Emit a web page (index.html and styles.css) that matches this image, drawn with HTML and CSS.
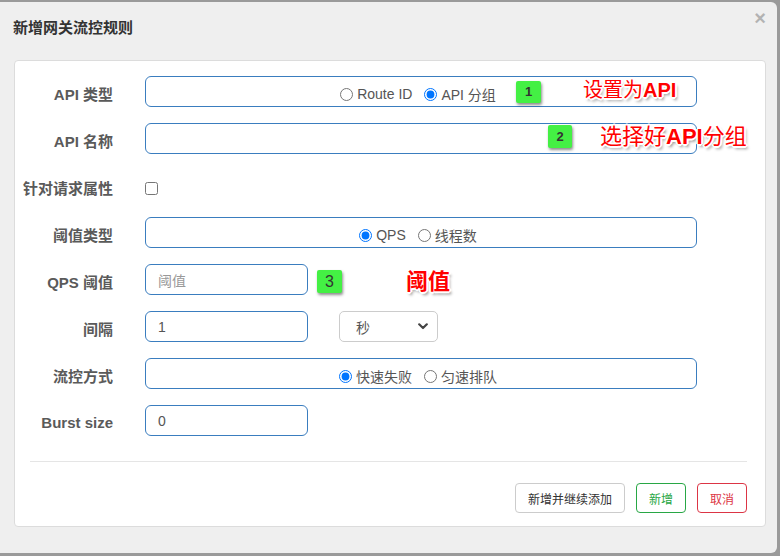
FILE: index.html
```html
<!DOCTYPE html>
<html lang="zh">
<head>
<meta charset="utf-8">
<title>新增网关流控规则</title>
<link rel="stylesheet" href="styles.css">
</head>
<body>
<div class="dialog">
  <div class="header">
    <h4 class="title">新增网关流控规则</h4>
    <span class="close">×</span>
  </div>
  <div class="panel">
    <div class="form">
      <div class="row">
        <label class="lbl">API 类型</label>
        <div class="box wide radios">
          <label class="opt"><input type="radio" name="t"> Route ID</label>
          <label class="opt"><input type="radio" name="t" checked> API 分组</label>
        </div>
      </div>
      <div class="row">
        <label class="lbl">API 名称</label>
        <div class="box wide"></div>
      </div>
      <div class="row">
        <label class="lbl">针对请求属性</label>
        <div class="check"><input type="checkbox"></div>
      </div>
      <div class="row">
        <label class="lbl">阈值类型</label>
        <div class="box wide radios">
          <label class="opt"><input type="radio" name="q" checked> QPS</label>
          <label class="opt"><input type="radio" name="q"> 线程数</label>
        </div>
      </div>
      <div class="row">
        <label class="lbl">QPS 阈值</label>
        <div class="box small"><span class="ph">阈值</span></div>
      </div>
      <div class="row">
        <label class="lbl">间隔</label>
        <div class="inline">
          <div class="box small"><span class="val">1</span></div>
          <div class="select"><span class="val">秒</span>
            <svg class="chev" width="10" height="7" viewBox="0 0 10 7"><path d="M1.2 1.3 L5 5 L8.8 1.3" fill="none" stroke="#444" stroke-width="2.2" stroke-linecap="round" stroke-linejoin="round"/></svg>
          </div>
        </div>
      </div>
      <div class="row">
        <label class="lbl">流控方式</label>
        <div class="box wide radios">
          <label class="opt"><input type="radio" name="c" checked> 快速失败</label>
          <label class="opt"><input type="radio" name="c"> 匀速排队</label>
        </div>
      </div>
      <div class="row">
        <label class="lbl">Burst size</label>
        <div class="box small"><span class="val">0</span></div>
      </div>
    </div>
    <div class="footer">
      <hr class="sep">
      <div class="buttons">
        <button class="btn">新增并继续添加</button>
        <button class="btn ok">新增</button>
        <button class="btn cancel">取消</button>
      </div>
    </div>
  </div>

  <span class="badge b1">1</span>
  <span class="badge b2">2</span>
  <span class="badge b3">3</span>
  <span class="note n1">设置为<b>API</b></span>
  <span class="note n2">选择好<b>API</b>分组</span>
  <span class="note n3">阈值</span>
</div>
</body>
</html>
```

FILE: styles.css
```css
html, body {
  margin: 0;
  padding: 0;
}
body {
  background: #9a9a9a;
  padding-top: 2px;
  font-family: "Liberation Sans", "Noto Sans CJK SC", sans-serif;
  height: 556px;
  box-sizing: border-box;
  overflow: hidden;
}
.dialog {
  position: relative;
  width: 777px;
  height: 551px;
  background: #efefef;
  border-radius: 0 6px 6px 0;
}
.header {
  height: 58px;
  box-sizing: border-box;
  padding: 16px 11px 0 13px;
  display: flex;
  justify-content: space-between;
  align-items: flex-start;
}
.title {
  margin: 0;
  font-size: 15px;
  line-height: 20px;
  font-weight: bold;
  color: #333;
}
.close {
  font-size: 20px;
  line-height: 21px;
  font-weight: bold;
  color: #000;
  opacity: 0.25;
  margin-top: -10px;
}
.panel {
  margin-left: 14px;
  width: 752px;
  box-sizing: border-box;
  background: #fff;
  border: 1px solid #dcdcdc;
  border-radius: 4px;
  padding: 15px 0 13px 0;
}
.form {
  display: flex;
  flex-direction: column;
  gap: 16px;
}
.row {
  display: grid;
  grid-template-columns: 98px 1fr;
  column-gap: 32px;
  align-items: center;
  height: 31px;
}
.lbl {
  text-align: right;
  font-size: 15px;
  font-weight: bold;
  color: #5a5a5a;
  white-space: nowrap;
  padding-top: 3px;
}
.box {
  height: 31px;
  box-sizing: border-box;
  border: 1px solid #3a7dbf;
  border-radius: 6px;
  display: flex;
  align-items: center;
  padding: 0 12px;
  font-size: 14px;
  color: #555;
}
.wide {
  width: 552px;
}
.small {
  width: 163px;
}
.radios {
  justify-content: center;
  padding: 5px 18px 0 12px;
  gap: 12px;
}
.opt {
  display: flex;
  align-items: center;
  color: #555;
  font-size: 14px;
}
.opt input {
  margin: 0 4px 0 0;
  width: 13px;
  height: 13px;
  accent-color: #0075ff;
}
.check {
  display: flex;
  align-items: center;
  padding-top: 5px;
}
.check input {
  margin: 0;
  width: 13px;
  height: 13px;
}
.ph {
  color: #999;
}
.val {
  color: #555;
}
.inline {
  display: flex;
  gap: 31px;
  align-items: center;
}
.select {
  width: 99px;
  height: 31px;
  box-sizing: border-box;
  border: 1px solid #ccc;
  border-radius: 5px;
  display: flex;
  align-items: center;
  justify-content: space-between;
  padding: 0 9px 0 16px;
  font-size: 14px;
}
.footer {
  padding: 0 18px 0 15px;
}
.sep {
  margin: 25px 0 0 0;
  border: 0;
  border-top: 1px solid #e5e5e5;
  height: 0;
}
.buttons {
  margin-top: 21px;
  display: flex;
  justify-content: flex-end;
  gap: 11px;
}
.btn {
  height: 30px;
  padding: 0 12px;
  font-family: "Liberation Sans", "Noto Sans CJK SC", sans-serif;
  font-size: 12px;
  background: #fff;
  color: #333;
  border: 1px solid #ccc;
  border-radius: 4px;
}
.btn.ok {
  color: #28a745;
  border-color: #28a745;
}
.btn.cancel {
  color: #dc3545;
  border-color: #dc3545;
}
.badge {
  position: absolute;
  width: 25px;
  height: 22px;
  background: #44f044;
  border-radius: 2px;
  box-shadow: 1px 2px 3px rgba(0, 0, 0, 0.45);
  color: #333;
  font-weight: bold;
  font-size: 13px;
  line-height: 22px;
  text-align: center;
}
.b1 { left: 516px; top: 79px; }
.b2 { left: 548px; top: 123px; width: 24px; height: 23px; line-height: 23px; }
.b3 { left: 317px; top: 268px; height: 23px; line-height: 23px; font-size: 16px; font-weight: normal; }
.note {
  position: absolute;
  color: #ff0000;
  font-family: "Liberation Sans", "Noto Sans CJK SC", sans-serif;
  white-space: nowrap;
  text-shadow: -1px -1px 0 #fff, 1px -1px 0 #fff, -1px 1px 0 #fff, 1px 1px 0 #fff,
    0 -2px 0 #fff, 0 2px 0 #fff, -2px 0 0 #fff, 2px 0 0 #fff,
    2px 3px 3px rgba(0, 0, 0, 0.45);
}
.note b {
  font-weight: bold;
}
.n1 { left: 583px; top: 74px; font-size: 20px; line-height: 28px; }
.n2 { left: 600px; top: 120px; font-size: 22px; line-height: 30px; }
.n3 { left: 406px; top: 264px; font-size: 22px; line-height: 32px; font-weight: bold; }
```
